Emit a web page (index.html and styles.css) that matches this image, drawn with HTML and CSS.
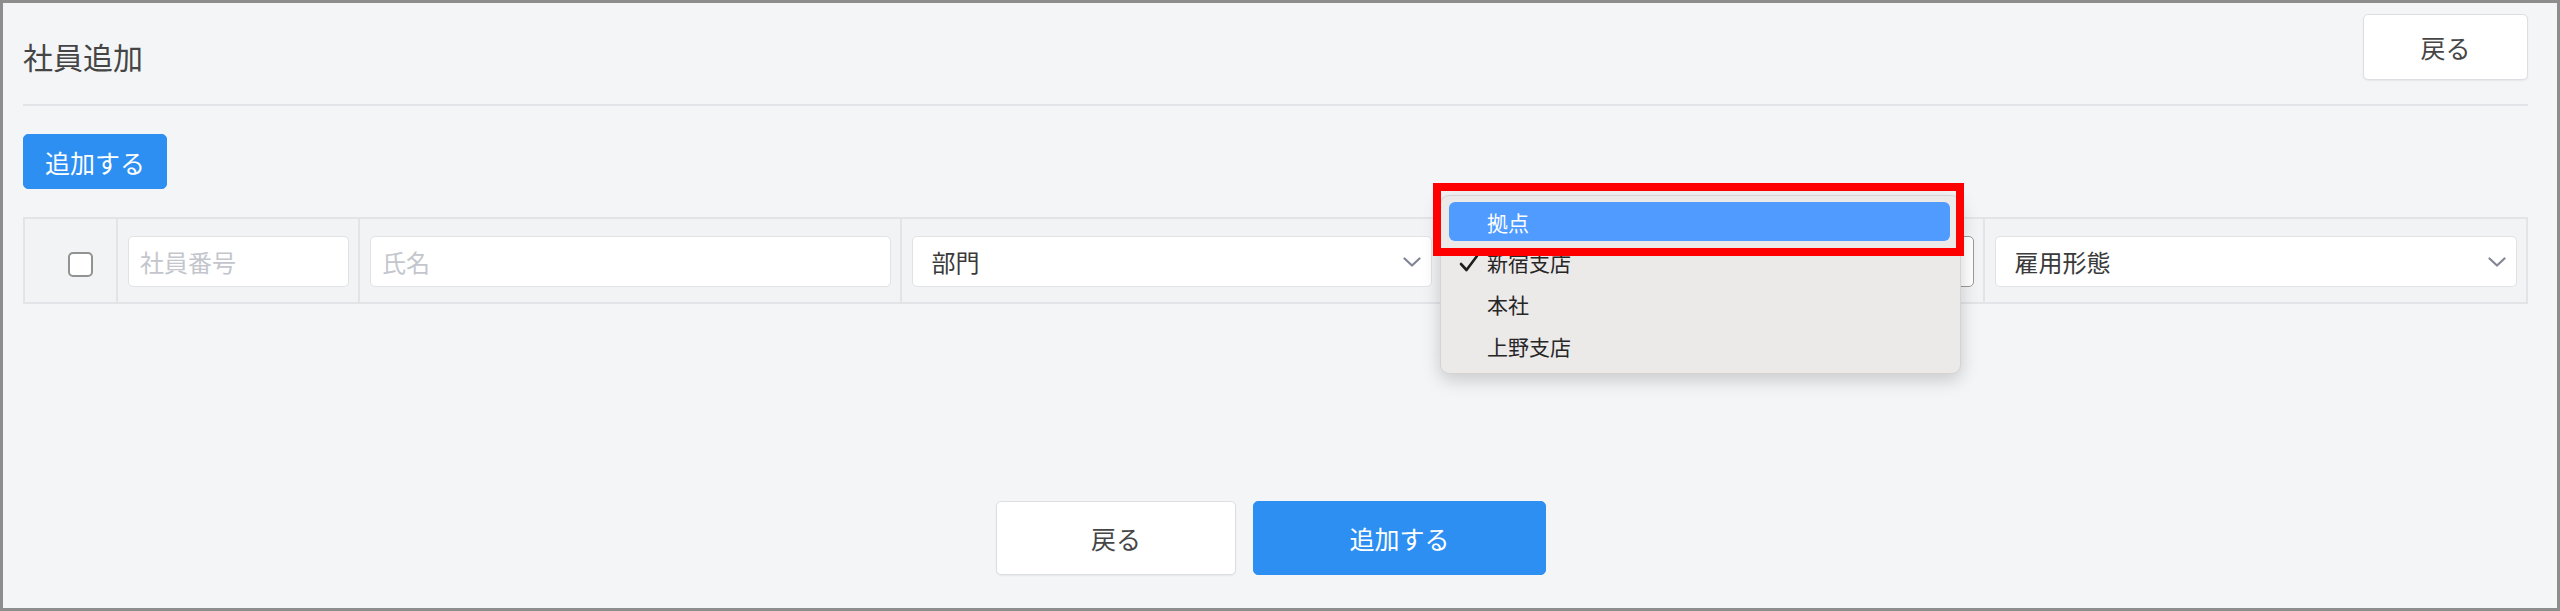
FILE: index.html
```html
<!DOCTYPE html>
<html lang="ja">
<head>
<meta charset="utf-8">
<title>社員追加</title>
<link rel="stylesheet" href="styles.css">
</head>
<body>
<div class="page">
  <div class="header">
    <h1 class="title">社員追加</h1>
    <button class="btn btn-default btn-top">戻る</button>
  </div>
  <div class="toolbar">
    <button class="btn btn-primary btn-add">追加する</button>
  </div>
  <div class="table">
    <div class="cell cell-check"><span class="checkbox"></span></div>
    <div class="cell"><div class="input placeholder">社員番号</div></div>
    <div class="cell"><div class="input placeholder">氏名</div></div>
    <div class="cell"><div class="select"><span>部門</span><svg class="chev" viewBox="0 0 18 10" width="18" height="10"><path d="M1.5 1.5 L9 8.5 L16.5 1.5" fill="none" stroke="#808695" stroke-width="2.2" stroke-linecap="round" stroke-linejoin="round"/></svg></div></div>
    <div class="cell"><div class="select select-open"></div></div>
    <div class="cell"><div class="select"><span>雇用形態</span><svg class="chev" viewBox="0 0 18 10" width="18" height="10"><path d="M1.5 1.5 L9 8.5 L16.5 1.5" fill="none" stroke="#808695" stroke-width="2.2" stroke-linecap="round" stroke-linejoin="round"/></svg></div></div>
  </div>
  <div class="footer">
    <button class="btn btn-default btn-back">戻る</button>
    <button class="btn btn-primary btn-submit">追加する</button>
  </div>

  <div class="menu">
    <div class="menu-item active">拠点</div>
    <div class="menu-item"><svg class="check" viewBox="0 0 20 18" width="20" height="18"><path d="M2 10 L7.5 16 L18 2" fill="none" stroke="#1e1e1e" stroke-width="2.6" stroke-linecap="round" stroke-linejoin="round"/></svg>新宿支店</div>
    <div class="menu-item">本社</div>
    <div class="menu-item">上野支店</div>
  </div>
  <div class="highlight-box"></div>
</div>
</body>
</html>
```

FILE: styles.css
```css
* { box-sizing: border-box; }
html, body { margin: 0; padding: 0; }
body {
  font-family: "Noto Sans CJK JP", "Noto Sans", sans-serif;
  color: #464c5b;
  background: #f4f5f7;
}
.page {
  position: relative;
  width: 2560px;
  height: 611px;
  border: 3px solid #8d8d8d;
  background: #f4f5f7;
  padding: 11px 29px 0 20px;
  overflow: hidden;
}
.header {
  display: flex;
  justify-content: space-between;
  align-items: flex-start;
  height: 92px;
  border-bottom: 2px solid #e2e4e7;
}
.title {
  margin: 27px 0 0 0;
  font-size: 30px;
  line-height: 30px;
  font-weight: 400;
  color: #454545;
}
.btn {
  font-family: "Noto Sans CJK JP", "Noto Sans", sans-serif;
  font-size: 25px;
  border-radius: 5px;
  padding: 0;
  cursor: pointer;
  display: flex;
  align-items: center;
  justify-content: center;
}
.btn-default {
  background: #ffffff;
  border: 1px solid #dcdee2;
  color: #464646;
  box-shadow: 0 1px 2px rgba(0,0,0,0.06);
}
.btn-primary {
  background: #2d8ff2;
  border: 1px solid #2d8ff2;
  color: #ffffff;
}
.btn-top { width: 165px; height: 66px; }
.toolbar {
  margin-top: 28px;
  display: flex;
}
.btn-add { width: 144px; height: 55px; }
.table {
  margin-top: 28px;
  display: grid;
  grid-template-columns: 93px 242px 1fr 1fr 1fr 1fr;
  height: 87px;
  border: 2px solid #e2e4e8;
  background: #f2f3f5;
}
.cell {
  display: flex;
  align-items: center;
  padding: 0 9px 0 10px;
  border-right: 2px solid #e2e4e8;
}
.cell:last-child { border-right: none; }
.cell-check {
  justify-content: flex-end;
  padding-right: 23px;
}
.checkbox {
  display: block;
  width: 25px;
  height: 25px;
  margin-top: 7px;
  border: 2px solid #929292;
  border-radius: 5px;
  background: #ffffff;
}
.input, .select {
  width: 100%;
  height: 51px;
  margin-top: 2px;
  background: #ffffff;
  border: 1px solid #e0e2e6;
  border-radius: 5px;
  display: flex;
  align-items: center;
  font-size: 24px;
}
.input { padding-left: 11px; }
.placeholder { color: #c3c6cc; }
.select {
  padding: 0 10px 0 19px;
  justify-content: space-between;
  color: #3a3a3a;
}
.select-open { border: 1px solid #9a9a9a; }
.chev { display: block; }
.footer {
  margin-top: 197px;
  display: flex;
  justify-content: center;
  gap: 17px;
  padding-right: 9px;
}
.btn-back { width: 240px; height: 74px; }
.btn-submit { width: 293px; height: 74px; }

/* open select menu (overlay) */
.menu {
  position: absolute;
  left: 1437px;
  top: 192px;
  width: 521px;
  height: 179px;
  padding: 6px 10px 0 8px;
  background: #ece9e9;
  border: 1px solid #d6d3d3;
  border-radius: 9px;
  box-shadow: 0 6px 18px rgba(0,0,0,0.18);
}
.menu-item {
  position: relative;
  height: 42px;
  display: flex;
  align-items: center;
  padding-left: 38px;
  font-size: 21px;
  color: #262626;
  border-radius: 6px;
}
.menu-item.active {
  height: 39px;
  background: #4f9bff;
  color: #ffffff;
}
.check {
  position: absolute;
  left: 10px;
  top: 13px;
  display: block;
}
.highlight-box {
  position: absolute;
  left: 1430px;
  top: 180px;
  width: 531px;
  height: 73px;
  border: 8px solid #ff0000;
}
```
